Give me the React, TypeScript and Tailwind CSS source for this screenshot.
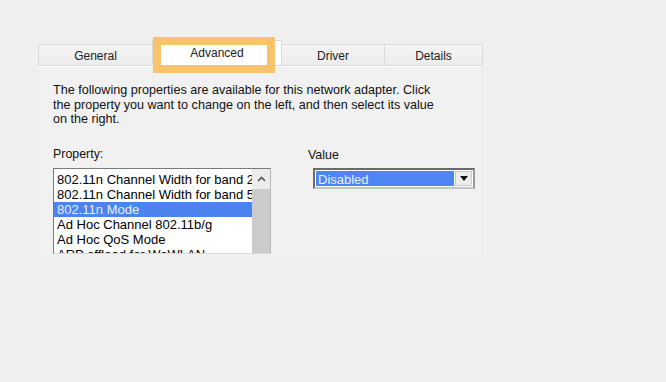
import React from "react";

const items = [
  "802.11n Channel Width for band 2.4GHz",
  "802.11n Channel Width for band 5.2GHz",
  "802.11n Mode",
  "Ad Hoc Channel 802.11b/g",
  "Ad Hoc QoS Mode",
  "ARP offload for WoWLAN",
];

export default function App() {
  return (
    <div className="w-[666px] h-[382px] bg-[#f0f0f0] relative overflow-hidden font-['Liberation_Sans',Arial,sans-serif] text-[12px] text-black">
      <div className="pt-[40px] pl-[38px]">
        <div className="w-[445px]">
          <div className="flex items-end h-[25px]">
            <div className="w-[114px] h-[21px] border-t border-l border-[#dadada] bg-gradient-to-b from-[#f4f4f4] to-[#ececec] flex items-center justify-center text-[#222] pt-[1px]">
              General
            </div>
            <div className="w-[130px] h-[25px] border-t border-x border-[#dadada] bg-white flex items-center justify-center text-[#222]">
              Advanced
            </div>
            <div className="w-[103px] h-[21px] border-t border-r border-[#dadada] bg-gradient-to-b from-[#f4f4f4] to-[#ececec] flex items-center justify-center text-[#222] pt-[1px]">
              Driver
            </div>
            <div className="w-[98px] h-[21px] border-t border-r border-[#dadada] bg-gradient-to-b from-[#f4f4f4] to-[#ececec] flex items-center justify-center text-[#222] pt-[1px]">
              Details
            </div>
          </div>
          <div className="border-t border-[#dadada] h-[190px] bg-[#f1f1f1] border-r border-r-[#e6e6e6]">
            <div className="border-t border-white pl-[15px] pt-[16px]">
              <p className="leading-[14.5px] whitespace-nowrap text-[12.6px] text-[#111]">
                The following properties are available for this network adapter. Click
                <br />
                the property you want to change on the left, and then select its value
                <br />
                on the right.
              </p>
              <div className="flex mt-[20px]">
                <div className="w-[218px]">
                  <div className="leading-[14px] h-[14px] text-[12.4px] text-[#111]">Property:</div>
                  <div className="mt-[7px] h-[86px] border border-[#7a7a7a] border-r-[#b9b9b9] border-b-[#d8d8d8] bg-white flex overflow-hidden">
                    <div className="flex-1 pt-[3px] overflow-hidden">
                      {items.map((it, i) => (
                        <div
                          key={i}
                          className={
                            "h-[15px] leading-[15px] pl-[3px] whitespace-nowrap overflow-hidden text-[13px] " +
                            (i === 2 ? "bg-[#4c84ef] text-[#e6eeff]" : "text-black")
                          }
                        >
                          {it}
                        </div>
                      ))}
                    </div>
                    <div className="w-[18px] flex flex-col">
                      <div className="h-[20px] bg-[#ececec] flex items-center justify-center">
                        <svg width="9" height="6" viewBox="0 0 9 6">
                          <path d="M1 5 L4.5 1.5 L8 5" fill="none" stroke="#555" strokeWidth="1.6" />
                        </svg>
                      </div>
                      <div className="flex-1 bg-[#cbcbcb]" />
                    </div>
                  </div>
                </div>
                <div className="ml-[37px]">
                  <div className="leading-[14px] h-[14px] text-[12.4px] text-[#111] pt-[1px]">Value</div>
                  <div className="mt-[7px] ml-[5px] w-[162px] h-[21px] border-2 border-[#6a6a6a] border-r-[#9a9a9a] border-b-[#c4c4c4] bg-white flex p-[1px]">
                    <div className="flex-1 bg-[#4d86f4] text-[#e8f0ff] leading-[16px] pt-[1px] pl-[2px] text-[13px]">
                      Disabled
                    </div>
                    <div className="w-[17px] ml-[1px] bg-[#ececec] border border-[#c9c9c9] flex items-center justify-center">
                      <svg width="8" height="5" viewBox="0 0 8 5">
                        <path d="M0 0 L8 0 L4 5 Z" fill="#111" />
                      </svg>
                    </div>
                  </div>
                </div>
              </div>
            </div>
          </div>
        </div>
      </div>
      <div className="absolute left-[153px] top-[37px] w-[122px] h-[36px] border-[8px] border-[#f7c46d]" />
    </div>
  );
}
